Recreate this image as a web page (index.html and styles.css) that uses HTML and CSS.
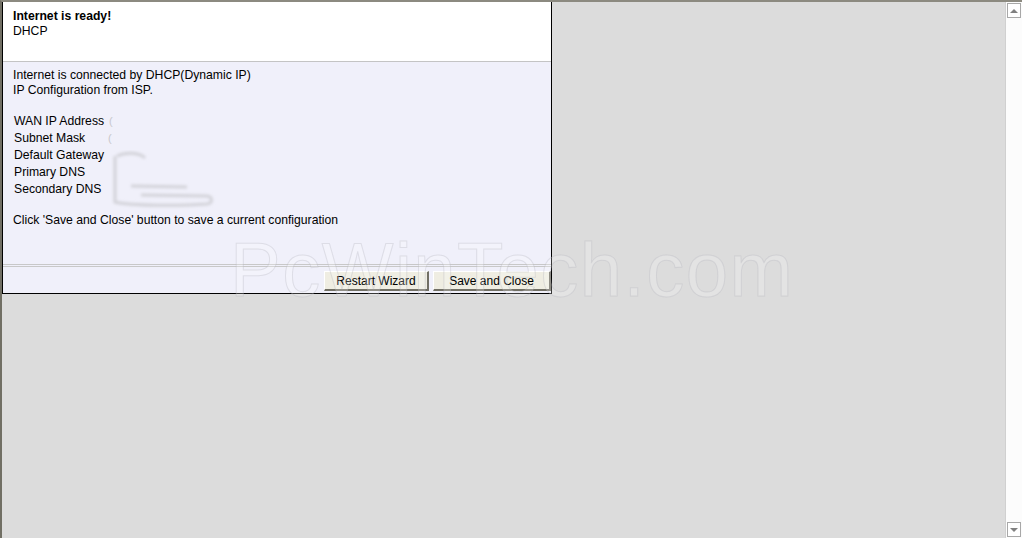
FILE: index.html
```html
<!DOCTYPE html>
<html>
<head>
<meta charset="utf-8">
<link rel="stylesheet" href="styles.css">
</head>
<body>
<div class="frame">
  <div class="viewport">
    <div class="panel">
      <div class="panel-head">
        <div class="title">Internet is ready!</div>
        <div class="subtitle">DHCP</div>
      </div>
      <div class="panel-body">
        <div class="intro">Internet is connected by DHCP(Dynamic IP)<br>IP Configuration from ISP.</div>
        <div class="info">
          <div class="row"><span class="label">WAN IP Address</span><span class="val paren">(</span></div>
          <div class="row"><span class="label">Subnet Mask</span><span class="val paren">(</span></div>
          <div class="row"><span class="label">Default Gateway</span><span class="val"></span></div>
          <div class="row"><span class="label">Primary DNS</span><span class="val"></span></div>
          <div class="row"><span class="label">Secondary DNS</span><span class="val"></span></div>
          <svg class="smear" width="110" height="60" viewBox="0 0 110 60">
            <defs><filter id="b"><feGaussianBlur stdDeviation="1.4"/></filter></defs>
            <g filter="url(#b)" fill="none" stroke="#d2d2d8" stroke-width="3">
              <path d="M6 6 C 14 2, 28 2, 34 8"/>
              <path d="M4 6 L 4 52 C 20 56, 70 56, 96 54 C 102 53, 102 47, 96 46 L 30 45"/>
              <path d="M20 36 L 76 37"/>
            </g>
            <g filter="url(#b)" stroke="#e2e2e8" stroke-width="6" fill="none">
              <path d="M8 12 L 8 48"/>
            </g>
          </svg>
        </div>
        <div class="hint">Click 'Save and Close' button to save a current configuration</div>
        <div class="spacer"></div>
        <div class="sep"></div>
        <div class="actions">
          <button class="btn btn-restart">Restart Wizard</button>
          <button class="btn btn-save">Save and Close</button>
        </div>
      </div>
    </div>
    <div class="watermark">PcWinTech.com</div>
  </div>
  <div class="scrollbar">
    <div class="sb-btn"><span class="arrow up"></span></div>
    <div class="sb-track"></div>
    <div class="sb-btn"><span class="arrow down"></span></div>
  </div>
</div>
</body>
</html>
```
FILE: styles.css
```css
html, body {
  margin: 0;
  padding: 0;
  width: 1022px;
  height: 538px;
  overflow: hidden;
}
body {
  font-family: Arial, "Liberation Sans", sans-serif;
  font-size: 12.2px;
  color: #000;
}
.frame {
  display: flex;
  width: 1022px;
  height: 538px;
  box-sizing: border-box;
  border-top: 2px solid #8c8a80;
  border-left: 2px solid #716f64;
  background: #dcdcdc;
}
.viewport {
  position: relative;
  flex: 1;
  background: #dcdcdc;
}
.panel {
  width: 548px;
  height: 291px;
  border: 1px solid #000;
  border-top: none;
  display: flex;
  flex-direction: column;
  background: #f0f0fa;
}
.panel-head {
  background: #fff;
  border-bottom: 1px solid #c4c4c4;
  padding: 7px 10px 0;
  box-sizing: border-box;
  height: 60px;
}
.title {
  font-weight: bold;
  line-height: 15px;
}
.subtitle {
  line-height: 15px;
}
.panel-body {
  flex: 1;
  display: flex;
  flex-direction: column;
  padding: 6px 0 0;
}
.intro {
  padding: 0 10px;
  line-height: 15px;
}
.info {
  position: relative;
  margin-top: 15px;
  padding-left: 11px;
}
.row {
  display: flex;
  height: 17px;
  line-height: 17px;
}
.label {
  width: 95px;
}
.val {
  color: #c8c8cc;
}
.paren {
  font-size: 11px;
}
.row:nth-child(2) .label {
  width: 94px;
}
.smear {
  position: absolute;
  left: 108px;
  top: 37px;
}
.hint {
  padding: 0 10px;
  margin-top: 15px;
  line-height: 15px;
}
.spacer {
  flex: 1;
}
.sep {
  height: 1px;
  border-top: 1px solid #c8c8c8;
  border-bottom: 1px solid #c8c8c8;
  margin-bottom: 4px;
}
.actions {
  display: flex;
  justify-content: flex-end;
  gap: 4px;
  padding-bottom: 2px;
}
.btn {
  height: 20px;
  padding: 0;
  font-family: Arial, "Liberation Sans", sans-serif;
  font-size: 12px;
  color: #000;
  background: #efede2;
  border-top: 1px solid #fff;
  border-left: 1px solid #fff;
  border-right: 2px solid #716f64;
  border-bottom: 2px solid #716f64;
  box-sizing: border-box;
}
.btn-restart { width: 105px; }
.btn-save { width: 118px; }
.watermark {
  position: absolute;
  left: 228px;
  top: 224px;
  font-family: Arial, "Liberation Sans", sans-serif;
  font-size: 76px;
  letter-spacing: 1.5px;
  color: rgba(255, 255, 255, 0.22);
  -webkit-text-stroke: 1px rgba(175, 175, 185, 0.3);
  pointer-events: none;
  white-space: nowrap;
}
.scrollbar {
  width: 17px;
  display: flex;
  flex-direction: column;
  background: #fcfcfc;
  border-left: 1px solid #d0d0d0;
  padding: 1px 1px;
  box-sizing: border-box;
}
.sb-btn {
  height: 15px;
  border: 1px solid #a8a8a8;
  box-sizing: border-box;
  display: flex;
  align-items: center;
  justify-content: center;
  background: #fff;
}
.sb-track { flex: 1; }
.arrow {
  width: 0;
  height: 0;
  border-left: 4px solid transparent;
  border-right: 4px solid transparent;
}
.arrow.up { border-bottom: 4px solid #808080; }
.arrow.down { border-top: 4px solid #808080; }
```
